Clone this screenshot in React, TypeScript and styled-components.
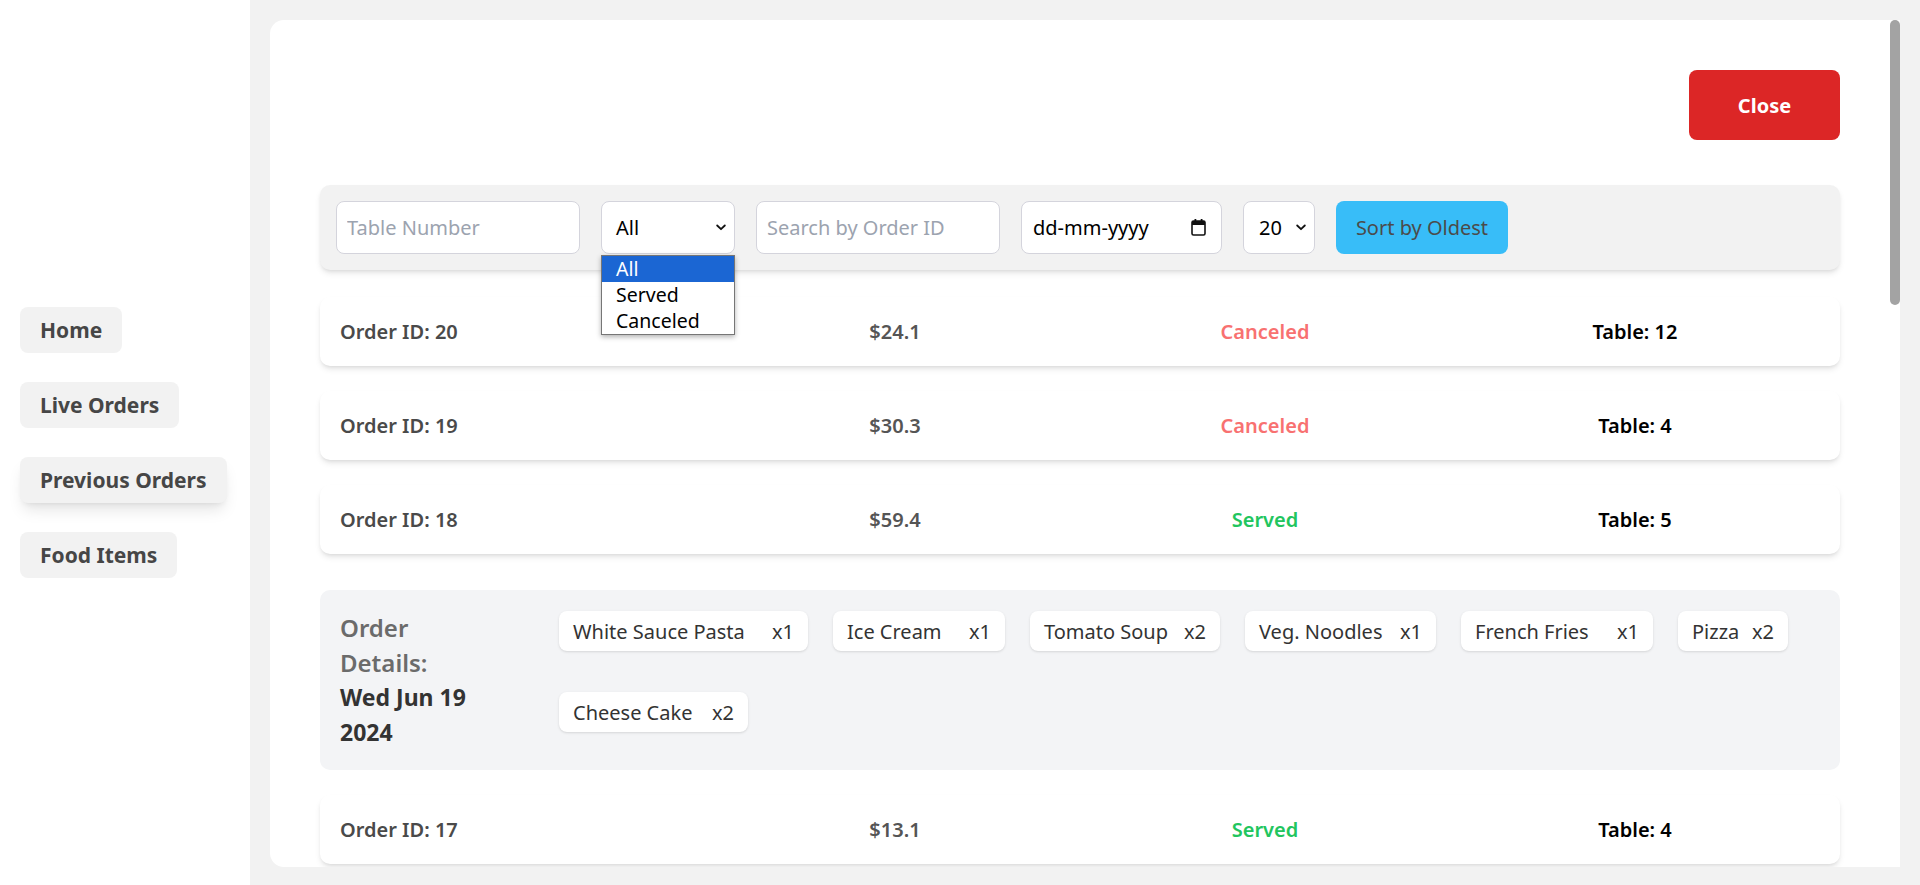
import React from "react";
import styled, { createGlobalStyle, css } from "styled-components";

const GlobalStyle = createGlobalStyle`
  html, body, #root { height: 100%; }
  body {
    margin: 0;
    background: #f2f2f2;
    font-family: "Noto Sans", "Open Sans", sans-serif;
    color: #333;
  }
  * { box-sizing: border-box; }
`;

const Layout = styled.div`
  display: flex;
  height: 100vh;
`;

const Sidebar = styled.nav`
  width: 250px;
  flex: 0 0 250px;
  background: #ffffff;
  display: flex;
  flex-direction: column;
  justify-content: center;
  align-items: flex-start;
  gap: 29px;
  padding-left: 20px;
`;

const NavButton = styled.button<{ $active?: boolean }>`
  height: 46px;
  padding: 0 20px;
  border: none;
  border-radius: 8px;
  background: #f2f2f2;
  color: #464646;
  font-family: "Noto Sans", sans-serif;
  font-size: 21px;
  font-weight: 700;
  cursor: pointer;
  ${(p) =>
    p.$active &&
    css`
      box-shadow: 0 10px 15px -3px rgba(0, 0, 0, 0.1), 0 4px 6px -4px rgba(0, 0, 0, 0.1);
    `}
`;

const Main = styled.main`
  flex: 1;
  padding: 20px 20px 0 20px;
  min-width: 0;
`;

const Card = styled.section`
  height: calc(100vh - 38px);
  background: #ffffff;
  border-radius: 14px 0 0 14px;
  overflow: hidden;
  display: flex;
`;

const ScrollArea = styled.div`
  flex: 1;
  min-width: 0;
  overflow-y: auto;
  padding: 50px 50px 175px 50px;
  scrollbar-width: none;
  &::-webkit-scrollbar {
    display: none;
  }
`;

const ScrollTrack = styled.div`
  flex: 0 0 10px;
  display: flex;
  flex-direction: column;
`;

const ScrollThumb = styled.div`
  height: 285px;
  border-radius: 5px;
  background: #a3a3a3;
`;

const Header = styled.div`
  display: flex;
  justify-content: flex-end;
`;

const CloseButton = styled.button`
  width: 151px;
  height: 70px;
  border: none;
  border-radius: 8px;
  background: #dc2626;
  color: #ffffff;
  font-family: "Noto Sans", sans-serif;
  font-size: 20px;
  font-weight: 700;
  cursor: pointer;
`;

const FilterBar = styled.div`
  margin-top: 45px;
  background: #f2f2f2;
  border-radius: 10px;
  padding: 16px;
  display: flex;
  align-items: center;
  gap: 21px;
  box-shadow: 0 4px 6px -1px rgba(0, 0, 0, 0.1), 0 2px 4px -2px rgba(0, 0, 0, 0.1);
`;

const fieldBase = css`
  height: 53px;
  border: 1px solid #d4d4dc;
  border-radius: 8px;
  background: #ffffff;
  font-family: "Noto Sans", sans-serif;
  font-size: 20px;
  color: #111;
`;

const TextInput = styled.input<{ $w: number }>`
  ${fieldBase};
  width: ${(p) => p.$w}px;
  padding: 0 10px;
  outline: none;
  &::placeholder {
    color: #9ca3af;
  }
`;

const SelectWrap = styled.div`
  position: relative;
`;

const SelectBox = styled.div<{ $w: number; $pl: number }>`
  ${fieldBase};
  width: ${(p) => p.$w}px;
  padding: 0 8px 0 ${(p) => p.$pl}px;
  display: flex;
  align-items: center;
  justify-content: space-between;
  color: #000;
`;

const DateBox = styled.div`
  ${fieldBase};
  width: 201px;
  padding: 0 15px 0 11px;
  display: flex;
  align-items: center;
  justify-content: space-between;
  color: #000;
`;

const DropList = styled.ul`
  position: absolute;
  top: calc(100% + 1px);
  left: 0;
  width: 134px;
  margin: 0;
  padding: 0;
  list-style: none;
  background: #ffffff;
  border: 1px solid #767676;
  box-shadow: 0 2px 5px rgba(0, 0, 0, 0.3);
  z-index: 10;
`;

const DropOption = styled.li<{ $selected?: boolean }>`
  height: 26px;
  line-height: 26px;
  padding-left: 14px;
  font-family: "Noto Sans", sans-serif;
  font-size: 19.5px;
  color: ${(p) => (p.$selected ? "#ffffff" : "#000000")};
  background: ${(p) => (p.$selected ? "#1b66d3" : "transparent")};
`;

const SortButton = styled.button`
  width: 172px;
  height: 53px;
  border: none;
  border-radius: 8px;
  background: #38bdf8;
  color: #4b4b4b;
  font-family: "Noto Sans", sans-serif;
  font-size: 20px;
  cursor: pointer;
`;

const OrderList = styled.div`
  margin-top: 27px;
  display: flex;
  flex-direction: column;
  gap: 25px;
`;

const OrderBlock = styled.div`
  display: flex;
  flex-direction: column;
`;

const OrderRow = styled.div`
  height: 69px;
  background: #ffffff;
  border-radius: 10px;
  padding: 0 20px;
  display: grid;
  grid-template-columns: repeat(4, 1fr);
  align-items: center;
  box-shadow: 0 4px 6px -1px rgba(0, 0, 0, 0.1), 0 2px 4px -2px rgba(0, 0, 0, 0.1);
  font-size: 20px;
  font-weight: 600;
`;

const Cell = styled.span<{ $tone: "id" | "price" | "served" | "canceled" | "table" }>`
  text-align: ${(p) => (p.$tone === "id" ? "left" : "center")};
  color: ${(p) =>
    ({
      id: "#4a4a4a",
      price: "#555555",
      served: "#22c55e",
      canceled: "#f87171",
      table: "#000000",
    })[p.$tone]};
`;

const DetailsPanel = styled.div`
  margin-top: 36px;
  background: #f3f4f6;
  border-radius: 10px;
  padding: 20px;
  display: flex;
  align-items: flex-start;
`;

const DetailsLabel = styled.div`
  flex: 0 0 219px;
  padding-right: 75px;
`;

const LabelTitle = styled.div`
  font-size: 24px;
  line-height: 35px;
  font-weight: 600;
  color: #6b6b6b;
`;

const LabelDate = styled.div`
  font-size: 23px;
  line-height: 35px;
  font-weight: 700;
  color: #333333;
`;

const Chips = styled.div`
  flex: 1;
  display: flex;
  flex-wrap: wrap;
  column-gap: 25px;
  row-gap: 41px;
  padding-top: 1px;
`;

const Chip = styled.div<{ $w: number }>`
  width: ${(p) => p.$w}px;
  height: 40px;
  padding: 0 14px;
  background: #ffffff;
  border-radius: 8px;
  display: flex;
  align-items: center;
  justify-content: space-between;
  font-size: 20px;
  color: #333333;
  box-shadow: 0 1px 3px 0 rgba(0, 0, 0, 0.1), 0 1px 2px -1px rgba(0, 0, 0, 0.1);
`;

const Chevron = () => (
  <svg width="10" height="7" viewBox="0 0 10 7" fill="none">
    <path d="M1.2 1.5 L5 5.2 L8.8 1.5" stroke="#111" strokeWidth="1.8" strokeLinecap="round" strokeLinejoin="round" />
  </svg>
);

const CalendarIcon = () => (
  <svg width="15" height="17" viewBox="0 0 15 17" fill="none">
    <rect x="1" y="2" width="13" height="14" rx="1.5" stroke="#111" strokeWidth="1.6" />
    <rect x="1" y="2" width="13" height="4" fill="#111" />
    <rect x="3.5" y="0" width="1.8" height="3" fill="#111" />
    <rect x="9.7" y="0" width="1.8" height="3" fill="#111" />
  </svg>
);

type Status = "Served" | "Canceled";
type Order = { id: number; price: string; status: Status; table: number; details?: boolean };

const orders: Order[] = [
  { id: 20, price: "$24.1", status: "Canceled", table: 12 },
  { id: 19, price: "$30.3", status: "Canceled", table: 4 },
  { id: 18, price: "$59.4", status: "Served", table: 5, details: true },
  { id: 17, price: "$13.1", status: "Served", table: 4 },
  { id: 16, price: "$42.6", status: "Served", table: 7 },
  { id: 15, price: "$18.9", status: "Canceled", table: 2 },
  { id: 14, price: "$27.5", status: "Served", table: 9 },
  { id: 13, price: "$36.2", status: "Served", table: 1 },
  { id: 12, price: "$11.4", status: "Served", table: 3 },
  { id: 11, price: "$48.0", status: "Canceled", table: 6 },
  { id: 10, price: "$22.7", status: "Served", table: 8 },
  { id: 9, price: "$15.3", status: "Served", table: 10 },
  { id: 8, price: "$33.8", status: "Served", table: 5 },
  { id: 7, price: "$29.1", status: "Canceled", table: 11 },
  { id: 6, price: "$19.6", status: "Served", table: 4 },
  { id: 5, price: "$54.2", status: "Served", table: 12 },
  { id: 4, price: "$12.9", status: "Served", table: 2 },
  { id: 3, price: "$38.4", status: "Canceled", table: 7 },
  { id: 2, price: "$25.0", status: "Served", table: 3 },
  { id: 1, price: "$21.7", status: "Served", table: 1 },
];

const items = [
  { name: "White Sauce Pasta", qty: 1, w: 249 },
  { name: "Ice Cream", qty: 1, w: 172 },
  { name: "Tomato Soup", qty: 2, w: 190 },
  { name: "Veg. Noodles", qty: 1, w: 191 },
  { name: "French Fries", qty: 1, w: 192 },
  { name: "Pizza", qty: 2, w: 110 },
  { name: "Cheese Cake", qty: 2, w: 189 },
];

export default function App() {
  return (
    <>
      <GlobalStyle />
      <Layout>
        <Sidebar>
          <NavButton>Home</NavButton>
          <NavButton>Live Orders</NavButton>
          <NavButton $active>Previous Orders</NavButton>
          <NavButton>Food Items</NavButton>
        </Sidebar>
        <Main>
          <Card>
            <ScrollArea>
              <Header>
                <CloseButton>Close</CloseButton>
              </Header>
              <FilterBar>
                <TextInput $w={244} placeholder="Table Number" />
                <SelectWrap>
                  <SelectBox $w={134} $pl={14}>
                    <span>All</span>
                    <Chevron />
                  </SelectBox>
                  <DropList>
                    <DropOption $selected>All</DropOption>
                    <DropOption>Served</DropOption>
                    <DropOption>Canceled</DropOption>
                  </DropList>
                </SelectWrap>
                <TextInput $w={244} placeholder="Search by Order ID" />
                <DateBox>
                  <span>dd-mm-yyyy</span>
                  <CalendarIcon />
                </DateBox>
                <SelectBox $w={72} $pl={15}>
                  <span>20</span>
                  <Chevron />
                </SelectBox>
                <SortButton>Sort by Oldest</SortButton>
              </FilterBar>
              <OrderList>
                {orders.map((o) => (
                  <OrderBlock key={o.id}>
                    <OrderRow>
                      <Cell $tone="id">Order ID: {o.id}</Cell>
                      <Cell $tone="price">{o.price}</Cell>
                      <Cell $tone={o.status === "Served" ? "served" : "canceled"}>{o.status}</Cell>
                      <Cell $tone="table">Table: {o.table}</Cell>
                    </OrderRow>
                    {o.details && (
                      <DetailsPanel>
                        <DetailsLabel>
                          <LabelTitle>Order Details:</LabelTitle>
                          <LabelDate>Wed Jun 19 2024</LabelDate>
                        </DetailsLabel>
                        <Chips>
                          {items.map((it) => (
                            <Chip key={it.name} $w={it.w}>
                              <span>{it.name}</span>
                              <span>x{it.qty}</span>
                            </Chip>
                          ))}
                        </Chips>
                      </DetailsPanel>
                    )}
                  </OrderBlock>
                ))}
              </OrderList>
            </ScrollArea>
            <ScrollTrack>
              <ScrollThumb />
            </ScrollTrack>
          </Card>
        </Main>
      </Layout>
    </>
  );
}
